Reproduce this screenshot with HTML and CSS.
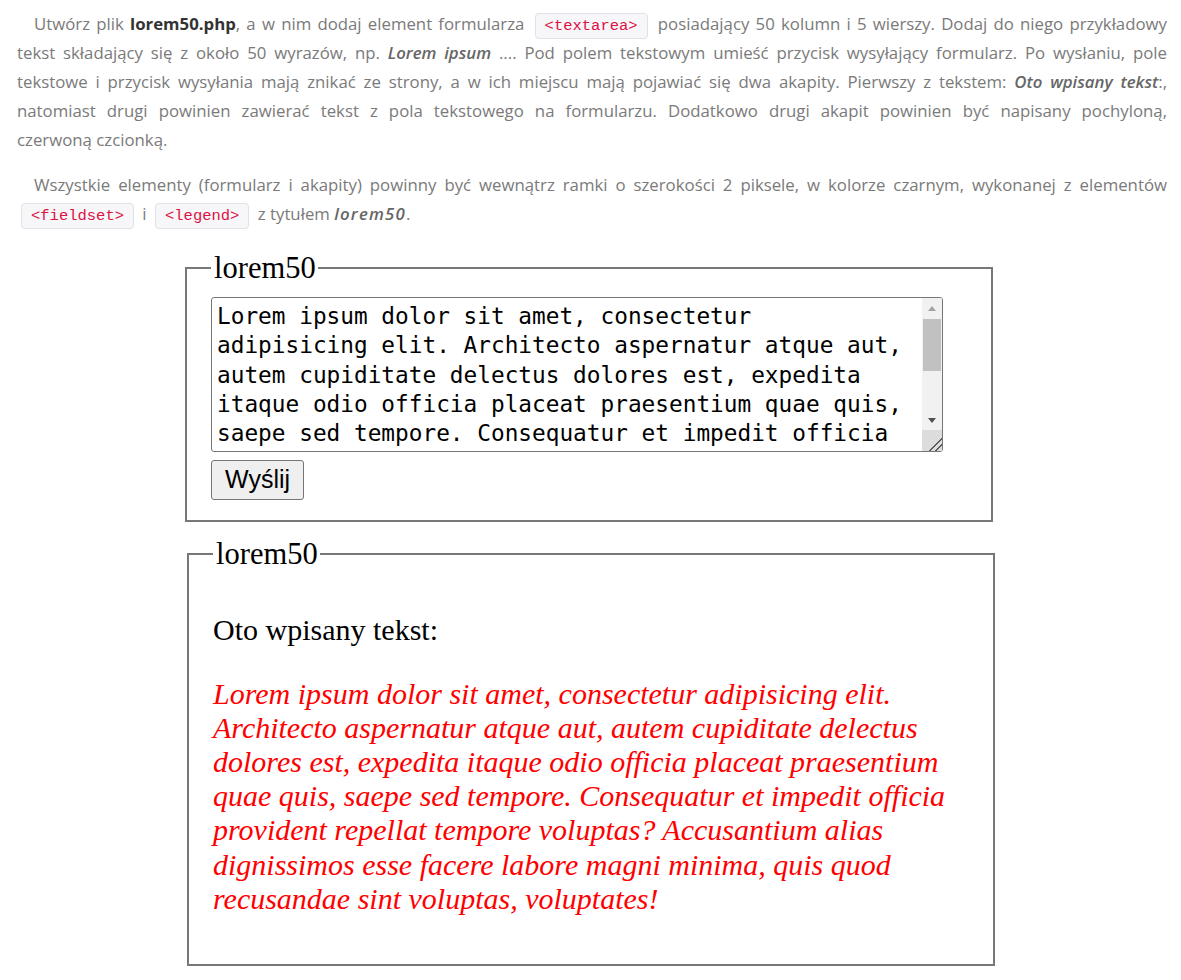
FILE: index.html
```html
<!DOCTYPE html>
<html lang="pl">
<head>
<meta charset="utf-8">
<title>lorem50</title>
<link rel="stylesheet" href="styles.css">
</head>
<body>
<div class="task">
  <p class="task-text">Utwórz plik <strong>lorem50.php</strong>, a w nim dodaj element formularza <code>&lt;textarea&gt;</code> posiadający 50 kolumn i 5 wierszy. Dodaj do niego przykładowy tekst składający się z około 50 wyrazów, np. <em>Lorem ipsum</em> .... Pod polem tekstowym umieść przycisk wysyłający formularz. Po wysłaniu, pole tekstowe i przycisk wysyłania mają znikać ze strony, a w ich miejscu mają pojawiać się dwa akapity. Pierwszy z tekstem: <em>Oto wpisany tekst</em>:, natomiast drugi powinien zawierać tekst z pola tekstowego na formularzu. Dodatkowo drugi akapit powinien być napisany pochyloną, czerwoną&nbsp;czcionką.</p>
  <p class="task-text task-text-last">Wszystkie elementy (formularz i akapity) powinny być wewnątrz ramki o szerokości 2 piksele, w kolorze czarnym, wykonanej z elementów <code>&lt;fieldset&gt;</code> i <code>&lt;legend&gt;</code> z tytułem <em class="em-wide">lorem50</em>.</p>
</div>

<form class="demo demo-form">
  <fieldset class="frame">
    <legend class="frame-title">lorem50</legend>
    <div class="input-wrap">
      <textarea class="lorem-input" cols="50" rows="5">Lorem ipsum dolor sit amet, consectetur adipisicing elit. Architecto aspernatur atque aut, autem cupiditate delectus dolores est, expedita itaque odio officia placeat praesentium quae quis, saepe sed tempore. Consequatur et impedit officia provident repellat tempore voluptas? Accusantium alias dignissimos esse facere labore magni minima, quis quod recusandae sint voluptas, voluptates!</textarea>
      <div class="scrollbar" aria-hidden="true">
        <div class="sb-btn sb-up"><span class="arrow-up"></span></div>
        <div class="sb-thumb"></div>
        <div class="sb-track"></div>
        <div class="sb-btn sb-down"><span class="arrow-down"></span></div>
        <div class="sb-corner"></div>
      </div>
    </div>
    <button type="button" class="send">Wyślij</button>
  </fieldset>
</form>

<div class="demo demo-result">
  <fieldset class="frame">
    <legend class="frame-title">lorem50</legend>
    <p class="result-label">Oto wpisany tekst:</p>
    <p class="result-text">Lorem ipsum dolor sit amet, consectetur adipisicing elit. Architecto aspernatur atque aut, autem cupiditate delectus dolores est, expedita itaque odio officia placeat praesentium quae quis, saepe sed tempore. Consequatur et impedit officia provident repellat tempore voluptas? Accusantium alias dignissimos esse facere labore magni minima, quis quod recusandae sint voluptas, voluptates!</p>
  </fieldset>
</div>
</body>
</html>
```

FILE: styles.css
```css
html, body {
  margin: 0;
  padding: 0;
  background: #ffffff;
}

body {
  font-family: "Open Sans", "Liberation Sans", sans-serif;
}

.task {
  padding: 9px 14px 0 17px;
}

.task-text {
  margin: 0 0 16px 0;
  font-size: 16.8px;
  line-height: 29px;
  color: #7a7a7a;
  text-align: justify;
  text-indent: 17px;
}

.task-text-last {
  margin-bottom: 14px;
}

.task-text strong {
  color: #333333;
  font-weight: 700;
}

.task-text em {
  font-family: "Open Sans", "Lato", sans-serif;
  font-style: italic;
  font-weight: 600;
  color: #666666;
}

.task-text .em-wide {
  letter-spacing: 1.2px;
}

.task-text code {
  font-family: "Liberation Mono", "Courier New", monospace;
  font-size: 15.5px;
  line-height: 17px;
  color: #dd1144;
  background: #f7f7f9;
  border: 1px solid #e1e1e8;
  border-radius: 4px;
  padding: 3px 9px;
  margin: 0 4px;
}

.demo {
  margin: 0;
}

.demo-form {
  padding: 9px 0 0 185px;
}

.demo-result {
  padding: 15px 0 0 187px;
}

.frame {
  box-sizing: border-box;
  width: 808px;
  margin: 0;
  border: 2px solid #777777;
  padding: 10px 22px 19px 24px;
  font-family: "Liberation Serif", "Times New Roman", serif;
  font-size: 30px;
  color: #000000;
}

.frame-title {
  padding: 0 2px 0 3px;
  font-size: 30.5px;
  line-height: 34px;
}

.demo-form .frame {
  padding-bottom: 20px;
}

.input-wrap {
  position: relative;
  width: 732px;
  height: 155px;
  margin-top: 2px;
}

.lorem-input {
  display: block;
  box-sizing: border-box;
  width: 732px;
  height: 155px;
  margin: 0;
  padding: 4px 33px 3px 5px;
  border: 1px solid #767676;
  border-radius: 3px;
  font-family: "DejaVu Sans Mono", "Liberation Mono", monospace;
  font-size: 22.75px;
  line-height: 29.3px;
  color: #000000;
  background: #ffffff;
  overflow: hidden;
  resize: none;
}

.scrollbar {
  position: absolute;
  top: 1px;
  right: 1px;
  bottom: 1px;
  width: 20px;
  display: flex;
  flex-direction: column;
  background: #f1f1f1;
  border-radius: 0 2px 2px 0;
  overflow: hidden;
}

.sb-btn {
  height: 20px;
  flex: none;
  display: flex;
  align-items: center;
  justify-content: center;
}

.arrow-up {
  width: 0;
  height: 0;
  border-left: 4px solid transparent;
  border-right: 4px solid transparent;
  border-bottom: 5px solid #a3a3a3;
}

.arrow-down {
  width: 0;
  height: 0;
  border-left: 4px solid transparent;
  border-right: 4px solid transparent;
  border-top: 5px solid #505050;
}

.sb-thumb {
  flex: none;
  height: 52px;
  margin: 1px 1px 0 1px;
  background: #c1c1c1;
}

.sb-track {
  flex: 1;
}

.sb-corner {
  flex: none;
  height: 21px;
  background-color: #dcdcdc;
  background-image:
    linear-gradient(135deg, transparent 66%, #5a5a5a 66%, #5a5a5a 71%, transparent 71%),
    linear-gradient(135deg, transparent 81%, #5a5a5a 81%, #5a5a5a 86%, transparent 86%);
}

.send {
  display: block;
  margin: 8px 0 0 0;
  padding: 4px 13px 5px 13px;
  font-family: "Liberation Sans", Arial, sans-serif;
  font-size: 25px;
  line-height: 29px;
  color: #000000;
  background: #efefef;
  border: 1px solid #767676;
  border-radius: 3px;
}

.result-label {
  margin: 32px 0 0 0;
  line-height: 34.5px;
}

.result-text {
  margin: 29px 0 29px 0;
  line-height: 34.2px;
  font-style: italic;
  color: #ff0000;
}
```
